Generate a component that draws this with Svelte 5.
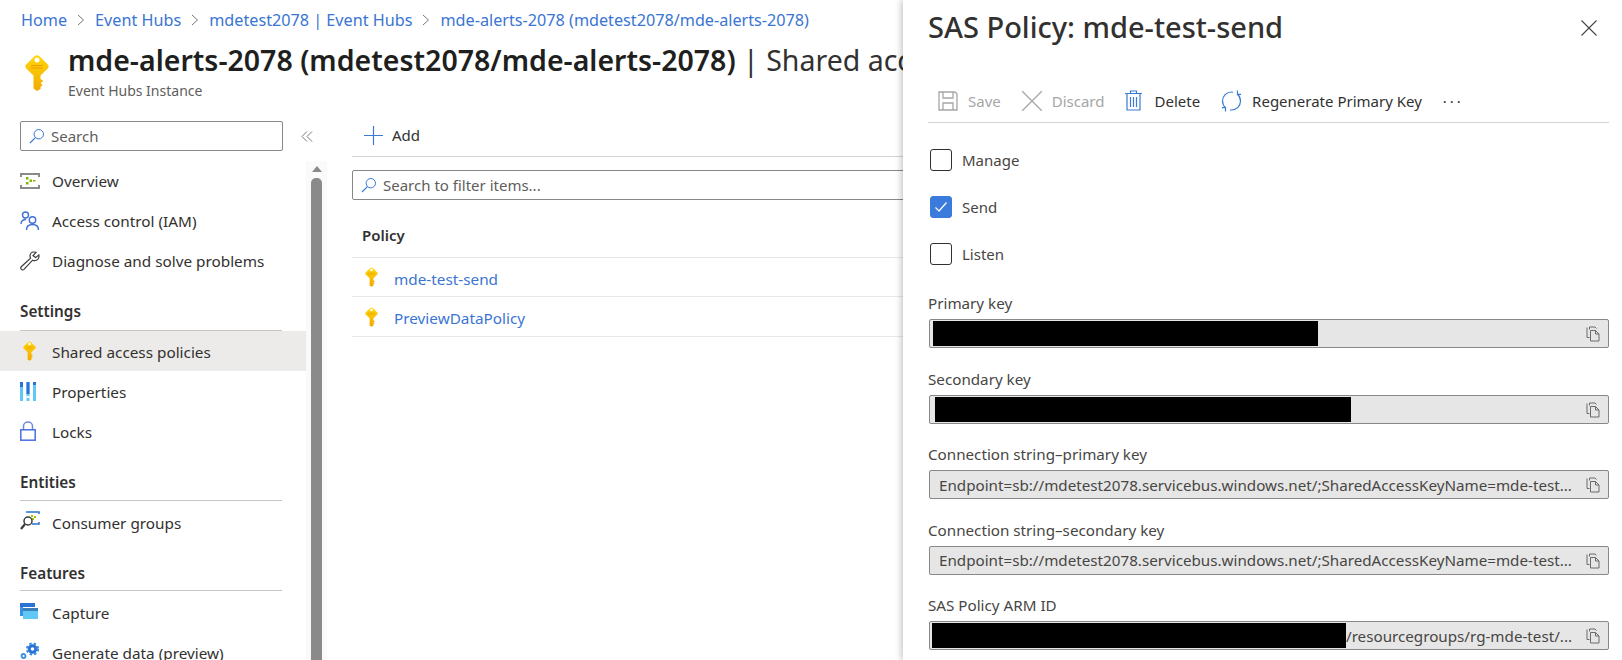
<script lang="ts">
  const crumbs = ['Home', 'Event Hubs', 'mdetest2078 | Event Hubs', 'mde-alerts-2078 (mdetest2078/mde-alerts-2078)'];
  const policies = ['mde-test-send', 'PreviewDataPolicy'];
  const perms = [
    { label: 'Manage', on: false },
    { label: 'Send', on: true },
    { label: 'Listen', on: false },
  ];
  const fields = [
    { label: 'Primary key', black: 385, left: 3 },
    { label: 'Secondary key', black: 416, left: 5 },
    { label: 'Connection string–primary key', text: 'Endpoint=sb://mdetest2078.servicebus.windows.net/;SharedAccessKeyName=mde-test...' },
    { label: 'Connection string–secondary key', text: 'Endpoint=sb://mdetest2078.servicebus.windows.net/;SharedAccessKeyName=mde-test...' },
    { label: 'SAS Policy ARM ID', black: 414, left: 2, after: '/resourcegroups/rg-mde-test/...' },
  ];
</script>

{#snippet key(w, h)}
  <svg width={w} height={h} viewBox="0 0 24 36">
    <defs>
      <linearGradient id="keyfill" x1="0" y1="0" x2="0" y2="1">
        <stop offset="0" stop-color="#ffd70a" />
        <stop offset="1" stop-color="#f2a900" />
      </linearGradient>
    </defs>
    <path d="M9.500 1.200Q12 -.5 14.500 1.200L22.800 9.500Q24.500 11.500 22.800 13.500L15.500 20.500V24L18.500 26L15.500 28L17.500 30L15.500 32V34L12 36L8.500 33.500V20.500L1.200 13.500Q-.5 11.500 1.200 9.500Z" fill="url(#keyfill)" />
    <circle cx="12" cy="5" r="2.500" fill="#fff" />
    <path d="M6 10.500H18M6 13H18" stroke="#ed9c00" stroke-width="1" />
  </svg>
{/snippet}

{#snippet search()}
  <svg class="search-ic" width="16" height="16" viewBox="0 0 16 16" fill="none">
    <circle cx="9.800" cy="6.200" r="4.700" stroke="#3a7bd5" stroke-width="1" />
    <path d="M6.400 9.600 1 15" stroke="#3a7bd5" stroke-width="1.200" />
  </svg>
{/snippet}

{#snippet copy()}
  <svg class="copy-ic" width="14" height="16" viewBox="0 0 14 16" fill="none" stroke="#6b6b6b" stroke-width="1">
    <path d="M3.500 3.500V1H9L10.500 2.500" />
    <path d="M3.500 11.500H1V1.500" />
    <path d="M4.500 4.500H9.500L13 8V15H4.500Z" />
    <path d="M9.500 4.500V8H13" />
  </svg>
{/snippet}

{#snippet navitem(icon, label, active = false)}
  <div class="nav-row" class:active>
    <span class="nav-ic">{@render icon()}</span>
    <span class="nav-txt">{label}</span>
  </div>
{/snippet}

{#snippet icOverview()}
  <svg width="20" height="18" viewBox="0 0 20 18" fill="none">
    <path d="M1 5V2H19V5M1 13V16H19V13" stroke="#8a8a8a" stroke-width="2" />
    <path d="M6 5h2.500v2.500H6zM6 10h2.500v2.500H6zM9.500 7.500h2.500V10H9.500zM13 8h2.500v1.500H13z" fill="#7fba00" />
  </svg>
{/snippet}
{#snippet icIam()}
  <svg width="20" height="20" viewBox="0 0 20 20" fill="none" stroke="#3f6fd8" stroke-width="1.400">
    <circle cx="5.500" cy="4" r="3" />
    <circle cx="12.500" cy="9" r="3.200" />
    <path d="M1 13C1 10 3 8.500 6 8.500M6.500 19C6.500 15 9 13.500 12.500 13.500S18.500 15 18.500 19" />
  </svg>
{/snippet}
{#snippet icWrench()}
  <svg width="20" height="20" viewBox="0 0 20 20" fill="none" stroke="#3b3b3b" stroke-width="1.200">
    <path d="M14 1C11.500 1 10 3 10 5C10 6 10.300 6.600 10.600 7.200L1.500 15.500C0.500 16.500 0.600 17.500 1.300 18.300C2 19 3.200 19.100 4 18.300L12.600 9.200C13.200 9.500 13.800 9.700 14.600 9.700C17 9.700 19 7.800 19 5.300C19 4.800 18.900 4.400 18.800 4L15.600 6.600L13 4.600L16 1.400C15.400 1.100 14.700 1 14 1Z" />
  </svg>
{/snippet}
{#snippet icKey()}{@render key(13, 20)}{/snippet}
{#snippet icProps()}
  <svg width="16" height="19" viewBox="0 0 16 19">
    <path d="M0 0h3v19H0zM6.500 0h3v19h-3zM13 0h3v19h-3z" fill="#5fc8f5" />
    <path d="M0 0h3v5H0zM6.500 0h3v12h-3zM13 0h3v3h-3z" fill="#2a72d4" />
    <path d="M6.500 14h3v2h-3z" fill="#fff" />
  </svg>
{/snippet}
{#snippet icLock()}
  <svg width="16" height="20" viewBox="0 0 16 20" fill="none">
    <path d="M3.500 9V5.200C3.500 2.800 5.500 1 8 1S12.500 2.800 12.500 5.200V9" stroke="#6f88e0" stroke-width="1.500" />
    <rect x="0.800" y="8.800" width="14.400" height="10.400" stroke="#4a6fe0" stroke-width="1.500" fill="#fff" />
  </svg>
{/snippet}
{#snippet icConsumer()}
  <svg width="20" height="20" viewBox="0 0 20 20" fill="none">
    <path d="M6 1H19V3M19 11V13H12" stroke="#2a72d4" stroke-width="1.500" />
    <path d="M11 4h2v2h-2zM14 5h2v2h-2zM12 7h2v2h-2z" fill="#a5c300" />
    <circle cx="8" cy="10" r="4" stroke="#3b3b3b" stroke-width="1.500" fill="#fff" />
    <path d="M5 13 1 18" stroke="#3b3b3b" stroke-width="2.200" />
  </svg>
{/snippet}
{#snippet icCapture()}
  <svg width="18" height="16" viewBox="0 0 18 16">
    <path d="M0 0h15v4H0z" fill="#2a72d4" />
    <path d="M0 4h3v9H0z" fill="#3a8fe0" />
    <path d="M3 5h15v3H3z" fill="#3a7fb5" />
    <path d="M3 8h15v8H3z" fill="#5fc8f5" />
  </svg>
{/snippet}
{#snippet icGen()}
  <svg width="20" height="18" viewBox="0 0 20 18" fill="none">
    <circle cx="12.500" cy="7" r="3.300" stroke="#2a72d4" stroke-width="3" />
    <circle cx="12.500" cy="7" r="5.500" stroke="#3a8fe0" stroke-width="2.200" stroke-dasharray="2.400 2" />
    <circle cx="3.500" cy="14" r="2" stroke="#3a8fe0" stroke-width="1.800" />
  </svg>
{/snippet}

<div class="page">
  <nav class="crumbs">
    {#each crumbs as c, i}
      {#if i > 0}
        <svg class="chev" width="8" height="12" viewBox="0 0 8 12" fill="none"><path d="M1 1l5.500 5L1 11" stroke="#777" /></svg>
      {/if}
      <a href="#top">{c}</a>
    {/each}
  </nav>

  <header class="head">
    <span class="head-ic">{@render key(24, 36)}</span>
    <div>
      <h1><b>mde-alerts-2078 (mdetest2078/mde-alerts-2078)</b> <span class="sep">| Shared access policies</span></h1>
      <p>Event Hubs Instance</p>
    </div>
  </header>

  <div class="body">
    <aside class="side">
      <div class="side-top">
        <div class="box side-search">{@render search()}<span>Search</span></div>
        <svg class="collapse" width="12" height="11" viewBox="0 0 12 11" fill="none" stroke="#777"><path d="M6 .5 1 5.500l5 5M11 .5l-5 5 5 5" /></svg>
      </div>
      <div class="side-rest">
        <div class="nav">
          {@render navitem(icOverview, 'Overview')}
          {@render navitem(icIam, 'Access control (IAM)')}
          {@render navitem(icWrench, 'Diagnose and solve problems')}
          <div class="sect"><span>Settings</span></div>
          {@render navitem(icKey, 'Shared access policies', true)}
          {@render navitem(icProps, 'Properties')}
          {@render navitem(icLock, 'Locks')}
          <div class="sect"><span>Entities</span></div>
          {@render navitem(icConsumer, 'Consumer groups')}
          <div class="sect"><span>Features</span></div>
          {@render navitem(icCapture, 'Capture')}
          {@render navitem(icGen, 'Generate data (preview)')}
        </div>
        <div class="scroll">
          <i class="arrow"></i>
          <i class="thumb"></i>
        </div>
      </div>
    </aside>

    <main class="main">
      <div class="cmd">
        <svg width="19" height="19" viewBox="0 0 19 19" stroke="#3a7bd5" stroke-width="1.200"><path d="M9.500 0v19M0 9.500h19" /></svg>
        <span>Add</span>
      </div>
      <div class="box filter">{@render search()}<span>Search to filter items...</span></div>
      <div class="th">Policy</div>
      {#each policies as p}
        <div class="tr">{@render key(13, 22)}<a href="#top">{p}</a></div>
      {/each}
    </main>
  </div>

  <section class="panel">
    <div class="panel-head">
      <h2>SAS Policy: mde-test-send</h2>
      <svg width="16" height="16" viewBox="0 0 16 16" stroke="#444" stroke-width="1.100"><path d="M.5.500l15 15M15.500.500l-15 15" /></svg>
    </div>

    <div class="tools">
      <div class="tool off">
        <svg width="20" height="20" viewBox="0 0 20 20" fill="none" stroke="#a6a6a6" stroke-width="1.300">
          <path d="M1 1H17L19 3V19H1Z" /><path d="M5 1V7H15V1M5 19V12H15V19" />
        </svg>
        <span>Save</span>
      </div>
      <div class="tool off">
        <svg width="20" height="20" viewBox="0 0 20 20" stroke="#a6a6a6" stroke-width="1.300"><path d="M0 0l20 20M20 0 0 20" /></svg>
        <span>Discard</span>
      </div>
      <div class="tool wide">
        <svg width="17" height="21" viewBox="0 0 17 21" fill="none" stroke="#3a7bd5" stroke-width="1.200">
          <path d="M0 3.500H17M5.500 3V1H11.500V3" /><path d="M2 4V20H15V4" /><path d="M5.500 7V17M8.500 7V17M11.500 7V17" />
        </svg>
        <span>Delete</span>
      </div>
      <div class="tool">
        <svg width="21" height="22" viewBox="0 0 21 22" fill="none" stroke="#3a7bd5" stroke-width="1.200">
          <path d="M12 2.300C11.500 2.100 11 2 10.500 2C5.500 2 1.500 6 1.500 11C1.500 13.800 2.800 16.300 4.800 18" />
          <path d="M9 19.700C9.500 19.900 10 20 10.500 20C15.500 20 19.500 16 19.500 11C19.500 8.200 18.200 5.700 16.200 4" />
          <path d="M16.500 0.500V4.300H20M4.500 21.500V17.700H1" />
        </svg>
        <span>Regenerate Primary Key</span>
      </div>
      <span class="more">···</span>
    </div>

    <div class="perms">
      {#each perms as p}
        <label class="perm">
          <span class="check" class:on={p.on}>
            {#if p.on}
              <svg width="14" height="12" viewBox="0 0 14 12" fill="none" stroke="#fff" stroke-width="1.200"><path d="M1.500 6.500 5 10l7.500-8.500" /></svg>
            {/if}
          </span>
          {p.label}
        </label>
      {/each}
    </div>

    <div class="fields">
      {#each fields as f}
        <div class="field">
          <div class="lab">{f.label}</div>
          <div class="ro">
            {#if f.black}
              <i class="redact" style="width:{f.black}px;margin-left:{f.left}px"></i>
            {/if}
            <span class="val">{f.text ?? f.after ?? ''}</span>
            {@render copy()}
          </div>
        </div>
      {/each}
    </div>
  </section>
</div>

<style>
  :global(body) { margin: 0; background: #fff; }
  .page {
    position: relative;
    width: 1622px; height: 660px; overflow: hidden;
    background: #fff; color: #323130;
    font-family: "Noto Sans", "Open Sans", sans-serif;
    font-size: 15px;
  }
  a { color: #3a75d3; text-decoration: none; }

  .crumbs { height: 40px; padding-left: 21px; display: flex; align-items: center; white-space: nowrap; font-size: 16.2px; }
  .chev { margin: 0 10px; }

  .head { height: 68px; display: flex; white-space: nowrap; }
  .head-ic { width: 68px; padding: 15px 0 0 25px; box-sizing: border-box; }
  h1 { margin: 0; font-size: 28.5px; font-weight: 400; line-height: 41px; color: #201f1e; }
  h1 b { font-weight: 600; }
  .sep { color: #323130; }
  .head p { margin: 0; font-size: 14px; color: #605e5c; line-height: 20px; }

  .body { display: flex; height: 552px; }
  .side { width: 352px; flex: none; display: flex; flex-direction: column; }
  .side-top { display: flex; align-items: center; padding: 13px 0 0 20px; gap: 18px; height: 30px; margin-bottom: 10px; }
  .box {
    box-sizing: border-box; height: 30px;
    border: 1px solid #8a8886; border-radius: 2px;
    display: flex; align-items: center; gap: 6px; padding-left: 8px;
    color: #605e5c;
  }
  .side-search { width: 263px; }
  .side-rest { display: flex; flex: 1; min-height: 0; }
  .nav { width: 306px; flex: none; font-size: 15.3px; }
  .nav-row { height: 40px; display: flex; align-items: center; padding-left: 20px; white-space: nowrap; }
  .nav-row.active { background: #edebe9; }
  .nav-ic { width: 32px; flex: none; display: flex; }
  .nav-row.active .nav-ic { padding-left: 3px; width: 29px; }
  .nav-txt { line-height: 1; padding-top: 2px; }
  .sect ~ .nav-row .nav-txt { padding-top: 4px; }
  .sect ~ .sect ~ .nav-row .nav-txt { padding-top: 6px; }
  .sect { height: 50px; margin: 0 24px 0 20px; box-sizing: border-box; border-bottom: 1px solid #c8c6c4; padding-top: 19px; font-weight: 600; line-height: 22px; color: #323130; }
  .sect ~ .sect { padding-top: 20px; }
  .sect ~ .sect ~ .sect { padding-top: 21px; }
  .scroll { width: 21px; background: #fafafa; position: relative; display: flex; flex-direction: column; align-items: center; }
  .arrow { margin-top: 5px; border: 5px solid transparent; border-top: 0; border-bottom: 6px solid #8a8a8a; }
  .thumb { width: 11px; flex: 1; margin-top: 6px; background: #8a8a8a; border-radius: 5px 5px 0 0; }

  .main { flex: 1; min-width: 0; font-size: 15.3px; }
  .cmd { height: 49px; box-sizing: border-box; border-bottom: 1px solid #d4d4d4; padding: 6px 0 0 12px; display: flex; align-items: center; gap: 9px; color: #323130; font-size: 15px; }
  .filter { margin-top: 13px; font-size: 15px; }
  .th { height: 57.5px; box-sizing: border-box; border-bottom: 1px solid #e8e8e8; padding: 25px 0 0 10px; font-weight: 600; line-height: 20px; font-size: 15px; }
  .tr { height: 39.5px; box-sizing: border-box; border-bottom: 1px solid #e8e8e8; display: flex; align-items: center; padding: 1px 0 0 13px; gap: 16px; }
  .tr a { padding-top: 3px; }

  .panel {
    position: absolute; top: 0; right: 0; bottom: 0; left: 903px;
    background: #fff; box-shadow: -2px 0 6px rgba(0, 0, 0, 0.22);
    padding: 0 13px 0 25px;
  }
  .panel-head { height: 55px; display: flex; align-items: center; justify-content: space-between; padding-right: 12px; }
  h2 { margin: 0 0 2px; font-size: 29px; font-weight: 500; color: #323130; line-height: 52px; }
  .tools { height: 68px; box-sizing: border-box; border-bottom: 1px solid #d4d4d4; display: flex; align-items: center; padding: 24px 0 0 10px; }
  .tool { display: flex; align-items: center; gap: 10px; margin-right: 21px; white-space: nowrap; font-size: 15px; }
  .tool.wide { gap: 12px; }
  .tool span { padding-top: 1px; }
  .tool.off { color: #a6a6a6; }
  .more { font-size: 15px; letter-spacing: 3px; }
  .perms { padding-top: 13px; }
  .perm { height: 47px; display: flex; align-items: center; gap: 10px; padding-left: 2px; font-size: 15px; color: #484644; }
  .check { width: 22px; height: 22px; box-sizing: border-box; border: 1px solid #323130; border-radius: 3px; display: flex; align-items: center; justify-content: center; }
  .check.on { background: #3a7bdb; border-color: #3a7bdb; }
  .fields { padding-top: 14px; }
  .field { height: 75.5px; }
  .lab { height: 28px; font-size: 15.2px; line-height: 24px; color: #484644; }
  .ro {
    box-sizing: border-box; height: 29px; margin-left: 1px;
    border: 1px solid #8a8886; border-radius: 2px; background: #e6e6e6;
    display: flex; align-items: center; position: relative;
    font-size: 15.2px; color: #484644; white-space: nowrap;
  }
  .redact { height: 25px; background: #000; flex: none; }
  .val { padding-left: 9px; flex: 1; overflow: hidden; }
  .redact + .val { padding-left: 0; }
  .copy-ic { position: absolute; right: 8px; top: 6px; }
</style>
